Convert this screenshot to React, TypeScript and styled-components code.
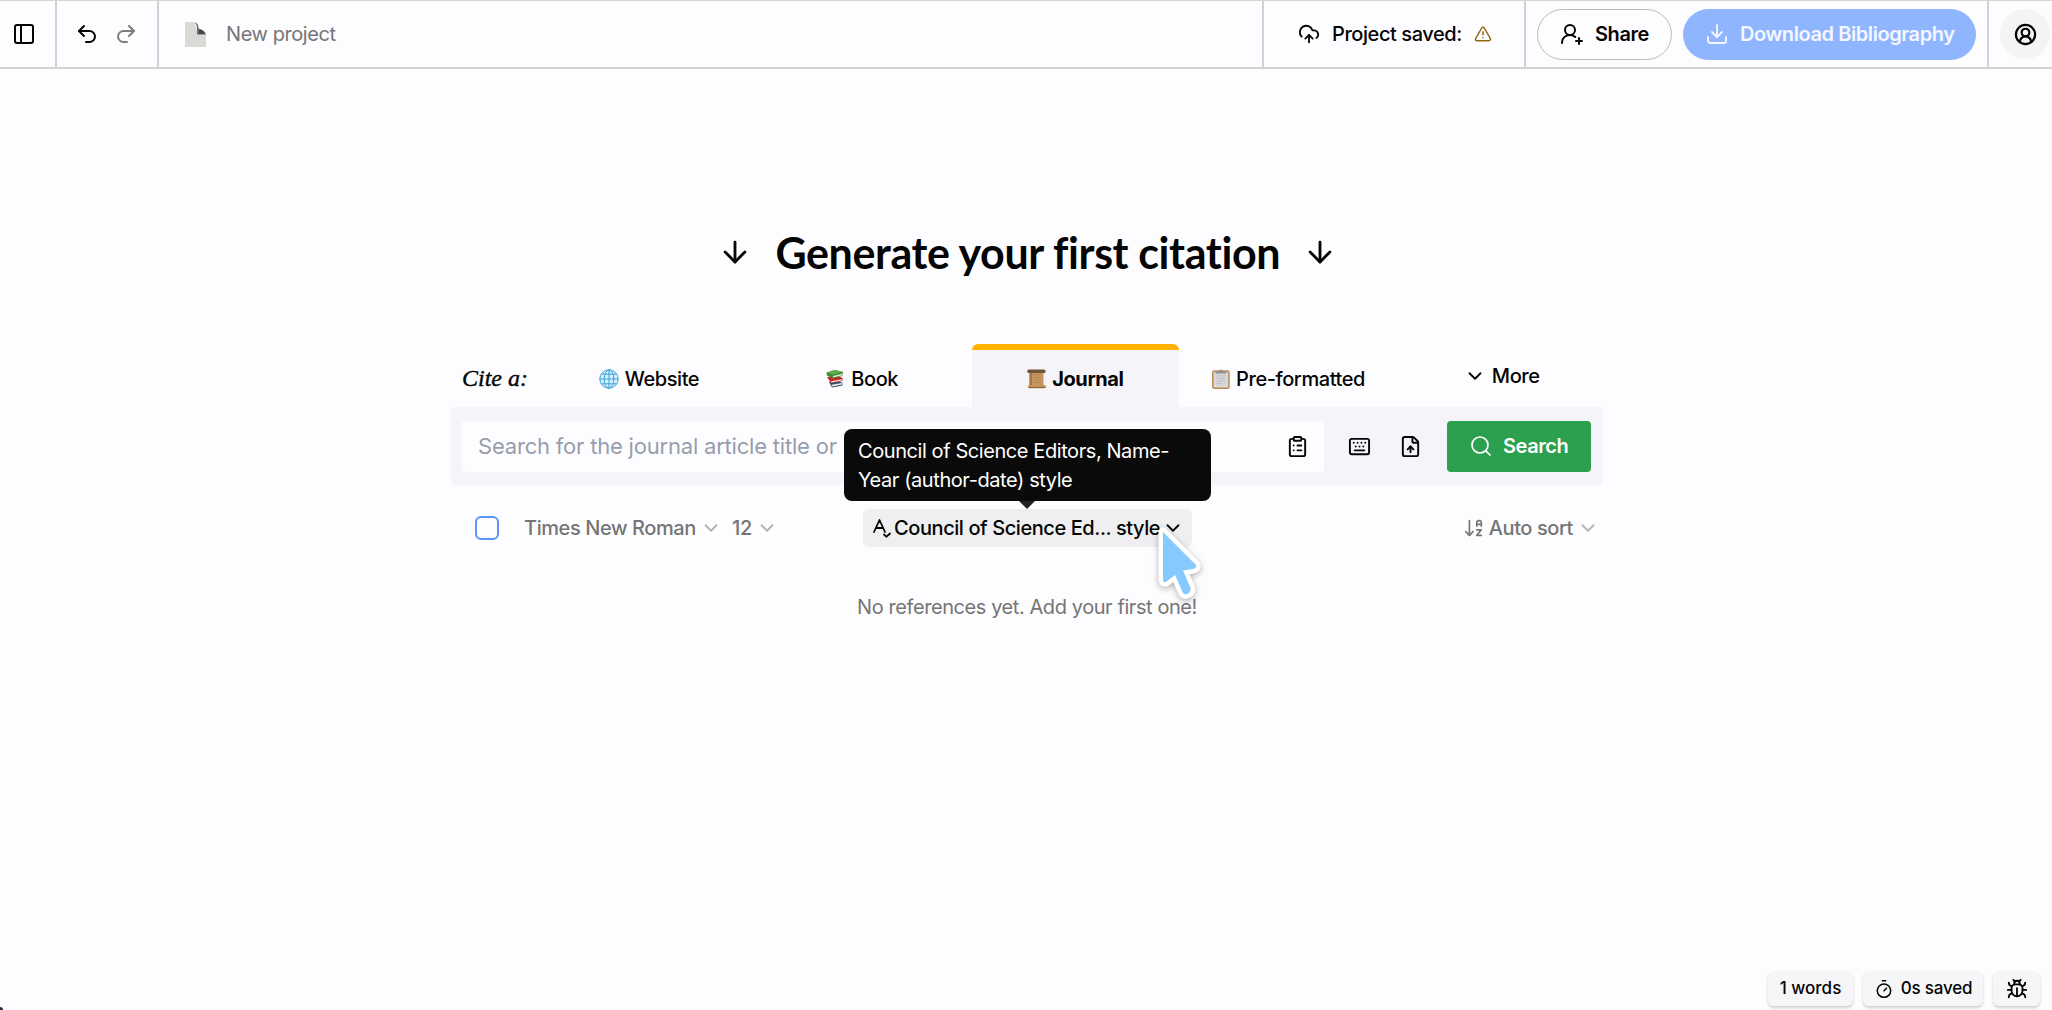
import React from "react";
import styled, { createGlobalStyle } from "styled-components";
import {
  ArrowDown, ArrowDownAZ, Bug, ChevronDown, CircleUserRound, ClipboardList, CloudUpload,
  Download, FileUp, Keyboard, PanelLeft, Redo2, Search, Timer, TriangleAlert, Undo2, UserRoundPlus,
} from "lucide-react";

const Global = createGlobalStyle`
  * { box-sizing: border-box; }
  html, body { margin: 0; background: #fdfdff; overflow: hidden; }
  body { font-family: Inter, "Liberation Sans", sans-serif; font-size: 20px; color: #050505; letter-spacing: -0.42px; }
  svg { display: block; flex: none; }
  button { font: inherit; letter-spacing: inherit; color: inherit; background: none; border: 0; padding: 0; }
`;

const Page = styled.div`
  position: relative;
  height: 1010px;
  display: flex;
  flex-direction: column;
  background: #fdfdff;
`;

const TopBar = styled.header`
  height: 69px;
  flex: none;
  display: flex;
  border-top: 1px solid #d6d6d4;
  border-bottom: 2px solid #d3d3d6;
`;

const BarCell = styled.div<{ $w?: number; $pl?: number; $gap?: number; $last?: boolean }>`
  width: ${(p) => (p.$w ? `${p.$w}px` : "auto")};
  flex: ${(p) => (p.$w ? "none" : "1")};
  padding-left: ${(p) => p.$pl ?? 0}px;
  display: flex;
  align-items: center;
  gap: ${(p) => p.$gap ?? 0}px;
  border-right: ${(p) => (p.$last ? 0 : "2px solid #d2d2d6")};
`;

const Text = styled.span<{ $weight?: number; $track?: number; $color?: string; $size?: number }>`
  font-size: ${(p) => p.$size ?? 20}px;
  font-weight: ${(p) => p.$weight ?? 400};
  letter-spacing: ${(p) => p.$track ?? -0.42}px;
  color: ${(p) => p.$color ?? "inherit"};
  line-height: 1.2;
  white-space: nowrap;
`;

const Pill = styled.button<{ $w: number; $primary?: boolean }>`
  width: ${(p) => p.$w}px;
  height: 51px;
  padding-left: 22px;
  display: flex;
  align-items: center;
  gap: 11px;
  border-radius: 26px;
  border: ${(p) => (p.$primary ? "0" : "1px solid #bcbcbe")};
  background: ${(p) => (p.$primary ? "#90b5ff" : "transparent")};
  color: ${(p) => (p.$primary ? "#f4f7ff" : "#050505")};
`;

const Avatar = styled.div`
  width: 50px;
  height: 50px;
  border-radius: 50%;
  display: grid;
  place-items: center;
  background: #f4f4f7;
`;

const Main = styled.main`
  flex: 1;
  width: 1152px;
  margin-left: 451px;
  display: flex;
  flex-direction: column;
`;

const Heading = styled.h1`
  margin: 153px 0 0;
  height: 60px;
  display: flex;
  align-items: center;
  justify-content: center;
  gap: 24px;
  font-family: Lato, sans-serif;
  font-size: 43px;
  font-weight: 700;
  line-height: 60px;
  white-space: nowrap;
`;

const HeadingText = styled.span`
  width: 503px;
  padding-top: 1px;
  text-align: center;
  letter-spacing: -0.4px;
`;

const Tabs = styled.nav`
  margin-top: 62px;
  height: 63px;
  display: flex;
  gap: 5.6px;
`;

const CiteLabel = styled.div`
  width: 88.6px;
  flex: none;
  padding: 20px 0 0 11px;
  font-family: "Liberation Serif", serif;
  font-style: italic;
  font-size: 24px;
  line-height: 28px;
  letter-spacing: 0;
  -webkit-text-stroke: 0.4px #050505;
  white-space: nowrap;
`;

const Tab = styled.button<{ $active?: boolean; $raised?: boolean; $gap?: number }>`
  width: 207.6px;
  flex: none;
  height: 63px;
  padding-bottom: ${(p) => (p.$raised ? 5 : 0)}px;
  display: flex;
  align-items: center;
  justify-content: center;
  gap: ${(p) => p.$gap ?? 6}px;
  border-top: 6px solid ${(p) => (p.$active ? "#ffb300" : "transparent")};
  border-radius: 6px 6px 0 0;
  background: ${(p) => (p.$active ? "#f5f5f9" : "transparent")};
`;

const SearchPanel = styled.section`
  height: 78px;
  display: flex;
  align-items: center;
  padding-left: 11px;
  border-radius: 4px;
  background: #f5f5f9;
`;

const Field = styled.div`
  width: 862px;
  height: 51px;
  display: flex;
  align-items: center;
  justify-content: space-between;
  padding: 0 15px 0 16px;
  background: #fdfdff;
  border-radius: 3px;
`;

const PanelIcons = styled.div`
  width: 123px;
  padding-left: 24px;
  display: flex;
  gap: 28px;
`;

const SearchButton = styled.button`
  width: 144px;
  height: 51px;
  padding-left: 22px;
  display: flex;
  align-items: center;
  gap: 10px;
  border-radius: 4px;
  background: #2ca04e;
  color: #fff;
`;

const Toolbar = styled.div`
  margin-top: 23px;
  height: 39px;
  display: flex;
  align-items: center;
  padding: 0 4px 0 24px;
  color: #757575;
`;

const Checkbox = styled.span`
  width: 24px;
  height: 24px;
  border: 2px solid #5b95f5;
  border-radius: 6px;
  margin-right: 25px;
`;

const Picker = styled.button<{ $w?: number; $push?: boolean }>`
  width: ${(p) => (p.$w ? `${p.$w}px` : "auto")};
  margin-left: ${(p) => (p.$push ? "auto" : 0)};
  display: flex;
  align-items: center;
  gap: 4px;
`;

const StylePicker = styled.button`
  position: relative;
  width: 329px;
  height: 38px;
  padding-left: 9px;
  display: flex;
  align-items: center;
  gap: 2px;
  border-radius: 6px;
  background: #efeff1;
  color: #050505;
`;

const Tooltip = styled.div`
  position: absolute;
  left: -19px;
  bottom: 46px;
  width: 367px;
  height: 72px;
  padding: 8px 0 0 14px;
  border-radius: 8px;
  background: #0a0a0a;
  color: #fff;
  text-align: left;
  line-height: 29.7px;
  white-space: nowrap;

  &::after {
    content: "";
    position: absolute;
    left: 175px;
    top: 72px;
    border: 8px solid transparent;
    border-top-color: #222;
    border-bottom: 0;
  }
`;

const Cursor = styled.svg`
  position: absolute;
  left: 288px;
  top: 12px;
  filter: drop-shadow(0 2px 3px rgba(0, 0, 0, 0.3));
`;

const Empty = styled.p`
  margin: 48px 0 0;
  text-align: center;
  line-height: 24px;
  color: #757575;
`;

const StatusBar = styled.footer`
  height: 39px;
  flex: none;
  padding-right: 12px;
  display: flex;
  justify-content: flex-end;
  gap: 10px;
`;

const Badge = styled.div<{ $w: number }>`
  width: ${(p) => p.$w}px;
  height: 35px;
  display: flex;
  align-items: center;
  justify-content: center;
  gap: 7px;
  border-radius: 6px;
  background: #f6f6f9;
  box-shadow: 0 2px 3px rgba(0, 0, 0, 0.18);
`;

const Corner = styled.span`
  position: absolute;
  left: 0;
  bottom: 0;
  width: 3px;
  height: 3px;
  border-top-right-radius: 3px;
  background: #2b2540;
`;

const PageIcon = () => (
  <svg width="21" height="25" viewBox="0 0 21 25">
    <path d="M0 0h9l4 11 8 1v13H0z" fill="#d9d9d6" />
    <path d="M9 0c3.500 1 4.500 3 4.500 6.500C17 7 20 9 21 12.500h-9C12.500 6 12 2 9 0z" fill="#66666a" />
    <path d="M14 7.500c3 .5 5 2 6 4.500h-6z" fill="#47474b" />
  </svg>
);

const GlobeIcon = () => (
  <svg width="20" height="20" viewBox="0 0 20 20" fill="none" stroke="#3fa0d8" strokeWidth="1">
    <circle cx="10" cy="10" r="9.2" fill="#d3f0fc" />
    <ellipse cx="10" cy="10" rx="4.8" ry="9.2" />
    <path d="M10 .8v18.4M.8 10h18.4M2.4 5.2h15.2M2.4 14.8h15.2" />
  </svg>
);

const BooksIcon = () => (
  <svg width="18" height="18" viewBox="0 0 18 18">
    <path d="M3 12 6 17.500 16.500 15.500V13L13 11z" fill="#39506b" />
    <path d="M5.500 14.800 16 13v1.500L6.500 16.500z" fill="#e8e8e8" />
    <path d="M1 7 5 13l11.500-2V8L12 6z" fill="#c62a22" />
    <path d="M5 11.300 16 9.300v1.300L5.500 12.600z" fill="#f1dede" />
    <path d="M.5 2.500 9 0l8 2-.5 4L6.500 8.300 1 5.500z" fill="#3f8a35" />
    <path d="M.5 2.500 9 0l8 2-10 2.800z" fill="#5fae4a" />
    <path d="M7 6l9.500-2.300v1.500L7 7.500z" fill="#e6eee2" />
  </svg>
);

const ScrollIcon = () => (
  <svg width="19" height="20" viewBox="0 0 19 20">
    <path d="M2.500 2h14v14.500h-14z" fill="#c59660" />
    <path d="M2.500 3h2.500v14H2.500z" fill="#a97745" />
    <path d="M6 6h8M6 8.500h8M6 11h8M6 13.500h8" stroke="#b58550" strokeWidth=".8" />
    <rect x=".3" y=".6" width="18.200" height="3.400" rx="1.500" fill="#6f5435" />
    <rect x="1" y="16" width="18" height="3.300" rx="1.500" fill="#c79255" />
    <path d="M1.500 18.500h16.500" stroke="#8b6237" />
  </svg>
);

const ClipboardPicture = () => (
  <svg width="18" height="20" viewBox="0 0 18 20">
    <rect x=".8" y="2" width="16.200" height="17.200" rx="1.500" fill="#d8d8da" stroke="#bb8a4e" strokeWidth="1.500" />
    <path d="M4.500 7h9M4.500 9.500h9M4.500 12h9M4.500 14.500h6" stroke="#b9b9bf" strokeWidth=".8" />
    <path d="M3.500 4.500V2.500h3.500L9 .3l2 2.200h3.500v2z" fill="#8c9296" />
  </svg>
);

const StyleIcon = () => (
  <svg width="20" height="20" viewBox="0 0 20 20" fill="none" stroke="currentColor" strokeWidth="1.800" strokeLinecap="round" strokeLinejoin="round">
    <path d="M2 14 7.500 2 13 14M4 10h7M12 16.500l2.300 2.200L18 15.500" />
  </svg>
);

const Chevron = ({ color = "currentColor" }: { color?: string }) => (
  <ChevronDown size={22} strokeWidth={2} color={color} />
);

const GREY = "#757575";
const FAINT = "#b4b4b0";

export default function App() {
  return (
    <Page>
      <Global />
      <TopBar>
        <BarCell $w={57} $pl={12}><PanelLeft size={24} /></BarCell>
        <BarCell $w={102} $pl={18} $gap={15}>
          <Undo2 size={24} />
          <Redo2 size={24} color="#7d7d7d" />
        </BarCell>
        <BarCell $pl={26} $gap={20}>
          <PageIcon />
          <Text $color={GREY}>New project</Text>
        </BarCell>
        <BarCell $w={262} $pl={34} $gap={12}>
          <CloudUpload size={22} />
          <Text $weight={500}>Project saved:</Text>
          <TriangleAlert size={18} color="#94660f" />
        </BarCell>
        <BarCell $w={463} $pl={11} $gap={11}>
          <Pill $w={135}>
            <UserRoundPlus size={24} />
            <Text $weight={600}>Share</Text>
          </Pill>
          <Pill $w={293} $primary>
            <Download size={24} strokeWidth={1.8} />
            <Text $weight={600}>Download Bibliography</Text>
          </Pill>
        </BarCell>
        <BarCell $w={63} $pl={11} $last>
          <Avatar><CircleUserRound size={23} strokeWidth={2.3} /></Avatar>
        </BarCell>
      </TopBar>

      <Main>
        <Heading>
          <ArrowDown size={34} strokeWidth={2} />
          <HeadingText>Generate your first citation</HeadingText>
          <ArrowDown size={34} strokeWidth={2} />
        </Heading>

        <Tabs>
          <CiteLabel>Cite a:</CiteLabel>
          <Tab><GlobeIcon /><Text $weight={500}>Website</Text></Tab>
          <Tab $gap={7}><BooksIcon /><Text $weight={500}>Book</Text></Tab>
          <Tab $active><ScrollIcon /><Text $weight={700}>Journal</Text></Tab>
          <Tab><ClipboardPicture /><Text $weight={500}>Pre-formatted</Text></Tab>
          <Tab $raised $gap={6}><Chevron /><Text $weight={500}>More</Text></Tab>
        </Tabs>

        <SearchPanel>
          <Field>
            <Text $size={22} $track={-0.2} $color="#979dad">Search for the journal article title or</Text>
            <ClipboardList size={23} />
          </Field>
          <PanelIcons>
            <Keyboard size={23} />
            <FileUp size={23} />
          </PanelIcons>
          <SearchButton>
            <Search size={24} strokeWidth={1.7} />
            <Text $weight={600}>Search</Text>
          </SearchButton>
        </SearchPanel>

        <Toolbar>
          <Checkbox />
          <Picker $w={208}><Text $weight={500}>Times New Roman</Text><Chevron color={FAINT} /></Picker>
          <Picker $w={131}><Text $weight={500}>12</Text><Chevron color={FAINT} /></Picker>
          <StylePicker>
            <StyleIcon />
            <Text $weight={500}>Council of Science Ed... style</Text>
            <Chevron />
            <Tooltip>
              Council of Science Editors, Name-<br />Year (author-date) style
            </Tooltip>
            <Cursor width="60" height="84" viewBox="0 0 60 84">
              <path
                d="M12 11 45 44Q46 47 42 48L32 49.500 39.500 67Q40 72 36 73 33 74 31.500 71L24 54 15 61Q12 62 12 58Z"
                fill="#85caff" stroke="#fff" strokeWidth="9" strokeLinejoin="round" paintOrder="stroke"
              />
            </Cursor>
          </StylePicker>
          <Picker $push>
            <ArrowDownAZ size={22} strokeWidth={1.8} />
            <Text $weight={500}>Auto sort</Text>
            <Chevron color={FAINT} />
          </Picker>
        </Toolbar>

        <Empty>No references yet. Add your first one!</Empty>
      </Main>

      <StatusBar>
        <Badge $w={85}><Text $size={17} $track={0} $weight={500}>1 words</Text></Badge>
        <Badge $w={120}><Timer size={20} strokeWidth={1.8} /><Text $size={17} $track={-0.2} $weight={500}>0s saved</Text></Badge>
        <Badge $w={47}><Bug size={22} /></Badge>
      </StatusBar>
      <Corner />
    </Page>
  );
}
